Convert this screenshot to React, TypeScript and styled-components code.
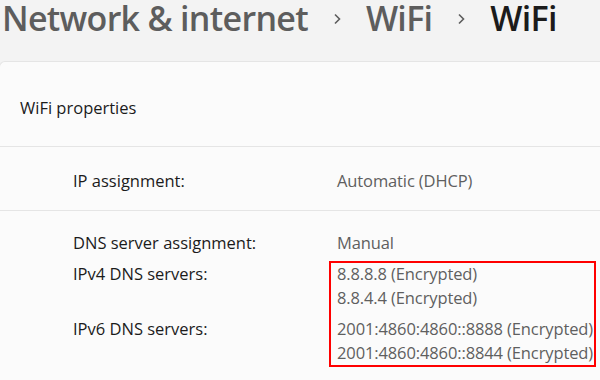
import React, { FC } from 'react';
import styled, { createGlobalStyle } from 'styled-components';

const GlobalStyle = createGlobalStyle`
	html, body {
		margin: 0;
		padding: 0;
		background: #f3f3f3;
		overflow: hidden;
	}
	body {
		font-family: 'Open Sans', 'Noto Sans', sans-serif;
		-webkit-font-smoothing: antialiased;
	}
`;

const Page = styled.div`
	width: 600px;
	height: 380px;
	overflow: hidden;
`;

const Breadcrumb = styled.h1`
	display: flex;
	align-items: flex-start;
	margin: 0;
	padding: 1px 0 0 2px;
	height: 61px;
	box-sizing: border-box;
	font-size: 34px;
	font-weight: 600;
	line-height: 34px;
	white-space: nowrap;
`;

const Crumb = styled.span<{ $current?: boolean }>`
	color: ${(p) => (p.$current ? '#1b1b1b' : '#5d5d5d')};
	letter-spacing: -0.7px;
`;

const Chevron = styled.span`
	display: inline-flex;
	align-items: center;
	justify-content: center;
	width: 58px;
	height: 34px;
	padding-top: 2px;
	box-sizing: border-box;
	color: #5d5d5d;
	svg {
		width: 10px;
		height: 14px;
	}
`;

const Card = styled.section`
	width: 620px;
	height: 340px;
	background: #fbfbfb;
	border: 1px solid #e5e5e5;
	border-right: none;
	border-radius: 6px 0 0 0;
	margin-left: -1px;
`;

const CardHeader = styled.div`
	height: 85px;
	display: flex;
	align-items: center;
	padding: 6px 0 0 20px;
	box-sizing: border-box;
	font-size: 16.5px;
	color: #1b1b1b;
	border-bottom: 1px solid #e5e5e5;
`;

const PropRow = styled.div<{ $divider?: boolean }>`
	display: grid;
	grid-template-columns: 264px 1fr;
	padding-left: 73px;
	font-size: 16.5px;
	line-height: 24px;
	${(p) => p.$divider && 'border-bottom: 1px solid #e5e5e5;'}
`;

const SingleRow = styled(PropRow)`
	height: 64px;
	align-items: center;
	padding-top: 4px;
	box-sizing: border-box;
`;

const DnsGrid = styled(PropRow)`
	padding-top: 20px;
	row-gap: 7px;
`;

const Label = styled.div<{ $row?: number }>`
	color: #1b1b1b;
	grid-column: 1;
	grid-row: ${(p) => p.$row ?? 'auto'};
`;

const Value = styled.div<{ $row?: number }>`
	color: #5f5f5f;
	grid-column: 2;
	grid-row: ${(p) => p.$row ?? 'auto'};
	white-space: nowrap;
	letter-spacing: -0.12px;
`;

const Highlight = styled.div`
	grid-column: 2;
	grid-row: 2 / 4;
	margin: -1px 0 -2px -8px;
	width: 267px;
	border: 2px solid #ff0000;
	box-sizing: border-box;
	pointer-events: none;
	z-index: 1;
`;

const ChevronIcon: FC = () => (
	<svg viewBox="0 0 10 14" fill="none">
		<path d="M3 2.5 L7.5 7 L3 11.5" stroke="currentColor" strokeWidth="1.6" />
	</svg>
);

export default function App() {
	return (
		<Page>
			<GlobalStyle />
			<Breadcrumb>
				<Crumb>Network &amp; internet</Crumb>
				<Chevron>
					<ChevronIcon />
				</Chevron>
				<Crumb>WiFi</Crumb>
				<Chevron>
					<ChevronIcon />
				</Chevron>
				<Crumb $current>WiFi</Crumb>
			</Breadcrumb>
			<Card>
				<CardHeader>WiFi properties</CardHeader>
				<SingleRow $divider>
					<Label>IP assignment:</Label>
					<Value>Automatic (DHCP)</Value>
				</SingleRow>
				<DnsGrid>
					<Label $row={1}>DNS server assignment:</Label>
					<Value $row={1}>Manual</Value>
					<Label $row={2}>IPv4 DNS servers:</Label>
					<Value $row={2}>
						8.8.8.8 (Encrypted)
						<br />
						8.8.4.4 (Encrypted)
					</Value>
					<Label $row={3}>IPv6 DNS servers:</Label>
					<Value $row={3}>
						2001:4860:4860::8888 (Encrypted)
						<br />
						2001:4860:4860::8844 (Encrypted)
					</Value>
					<Highlight />
				</DnsGrid>
			</Card>
		</Page>
	);
}
